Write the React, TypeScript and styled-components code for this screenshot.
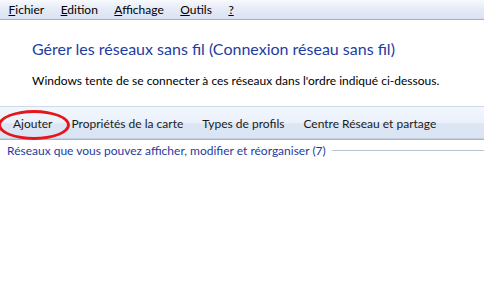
import React from 'react'
import styled, { createGlobalStyle } from 'styled-components'

const GlobalStyle = createGlobalStyle`
  html, body {
    margin: 0;
    padding: 0;
    background: #ffffff;
  }
  body {
    font-family: Lato, "Noto Sans", sans-serif;
    font-size: 12px;
    color: #000;
  }
`

const Window = styled.div`
  width: 484px;
  height: 307px;
  background: #fff;
  overflow: hidden;
  display: flex;
  flex-direction: column;
`

const MenuBar = styled.div`
  height: 19px;
  display: flex;
  align-items: center;
  background: linear-gradient(to bottom, #f8f9fd 0%, #e6ebf7 45%, #dbe2f3 100%);
  border-bottom: 1px solid #a7afbf;
`

const MenuItem = styled.span`
  padding: 0 8px 0 8.5px;
  line-height: 19px;
  color: #000;
`

const Mnemonic = styled.span`
  text-decoration: underline;
`

const Header = styled.div`
  padding: 19px 0 0 32px;
  display: flex;
  flex-direction: column;
`

const Title = styled.h1`
  margin: 0;
  font-weight: normal;
  font-size: 16px;
  line-height: 20px;
  color: #1e3ca0;
`

const Subtitle = styled.p`
  margin: 14px 0 0;
  line-height: 16px;
`

const CommandBar = styled.div`
  margin-top: 17px;
  height: 32px;
  display: flex;
  align-items: center;
  gap: 19px;
  padding-left: 13px;
  background: linear-gradient(to bottom, #f2f6fd 0%, #eaf1fb 50%, #dde6f4 52%, #dbe4f3 100%);
  border-top: 1px solid #cfd9e8;
  border-bottom: 1px solid #a9b6cb;
  box-shadow: inset 0 -1px 0 #c5d1e3;
  position: relative;
`

const Command = styled.span`
  color: #1b1b1b;
  white-space: nowrap;
`

const Highlight = styled.div`
  position: absolute;
  left: -2px;
  top: 3px;
  width: 72px;
  height: 30px;
  border: 3px solid #e4161c;
  border-radius: 50%;
  box-sizing: border-box;
`

const GroupHeader = styled.div`
  display: flex;
  align-items: center;
  gap: 6px;
  padding: 3px 0 0 7px;
  color: #1e3ca0;
  white-space: nowrap;
`

const GroupLine = styled.div`
  flex: 1;
  height: 1px;
  background: #b9c3d6;
`

const menus = [
  { key: 'F', rest: 'ichier' },
  { key: 'E', rest: 'dition' },
  { key: 'A', rest: 'ffichage' },
  { key: 'O', rest: 'utils' },
  { key: '?', rest: '' },
]

const commands = ['Ajouter', 'Propriétés de la carte', 'Types de profils', 'Centre Réseau et partage']

export default function App() {
  return (
    <Window>
      <GlobalStyle />
      <MenuBar>
        {menus.map(m => (
          <MenuItem key={m.key}>
            <Mnemonic>{m.key}</Mnemonic>{m.rest}
          </MenuItem>
        ))}
      </MenuBar>
      <Header>
        <Title>Gérer les réseaux sans fil (Connexion réseau sans fil)</Title>
        <Subtitle>Windows tente de se connecter à ces réseaux dans l'ordre indiqué ci-dessous.</Subtitle>
      </Header>
      <CommandBar>
        {commands.map(c => (
          <Command key={c}>{c}</Command>
        ))}
        <Highlight />
      </CommandBar>
      <GroupHeader>
        Réseaux que vous pouvez afficher, modifier et réorganiser (7)
        <GroupLine />
      </GroupHeader>
    </Window>
  )
}
